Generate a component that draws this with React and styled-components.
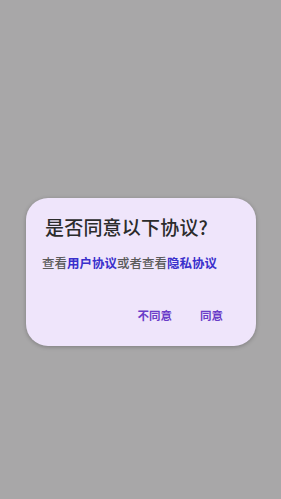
import React from 'react';
import styled, { createGlobalStyle } from 'styled-components';

const GlobalStyle = createGlobalStyle`
  html, body {
    margin: 0;
    padding: 0;
    background: #a8a7a8;
    font-family: "Noto Sans CJK SC", "Noto Sans", sans-serif;
  }
`;

const Page = styled.div`
  width: 100vw;
  height: 100vh;
  display: flex;
  justify-content: center;
  align-items: flex-start;
  padding-top: 198px;
  box-sizing: border-box;
`;

const Dialog = styled.div`
  width: 230px;
  height: 148px;
  margin-left: 1px;
  box-sizing: border-box;
  background: #efe5fb;
  border-radius: 22px;
  padding: 14px 0 0 16px;
  display: flex;
  flex-direction: column;
  box-shadow: 0 1px 4px rgba(0, 0, 0, 0.25);
`;

const Title = styled.h1`
  margin: 0 0 0 3px;
  font-size: 19px;
  line-height: 30px;
  font-weight: 500;
  color: #2b2b2b;
  letter-spacing: 0.2px;
`;

const Message = styled.p`
  margin: 12px 0 0 0;
  font-size: 12.5px;
  line-height: 18px;
  color: #5a5a5a;
  font-weight: 500;
`;

const Link = styled.span`
  color: #3a30cc;
  font-weight: 700;
`;

const Actions = styled.div`
  display: flex;
  justify-content: flex-end;
  gap: 28px;
  padding-right: 33px;
  margin-top: 35px;
`;

const Action = styled.button`
  background: none;
  border: none;
  padding: 0;
  font-family: inherit;
  font-size: 11.5px;
  line-height: 16px;
  font-weight: 700;
  color: #6a3dc8;
  cursor: pointer;
`;

export default function App() {
  return (
    <>
      <GlobalStyle />
      <Page>
        <Dialog>
          <Title>是否同意以下协议?</Title>
          <Message>
            查看<Link>用户协议</Link>或者查看<Link>隐私协议</Link>
          </Message>
          <Actions>
            <Action>不同意</Action>
            <Action>同意</Action>
          </Actions>
        </Dialog>
      </Page>
    </>
  );
}
